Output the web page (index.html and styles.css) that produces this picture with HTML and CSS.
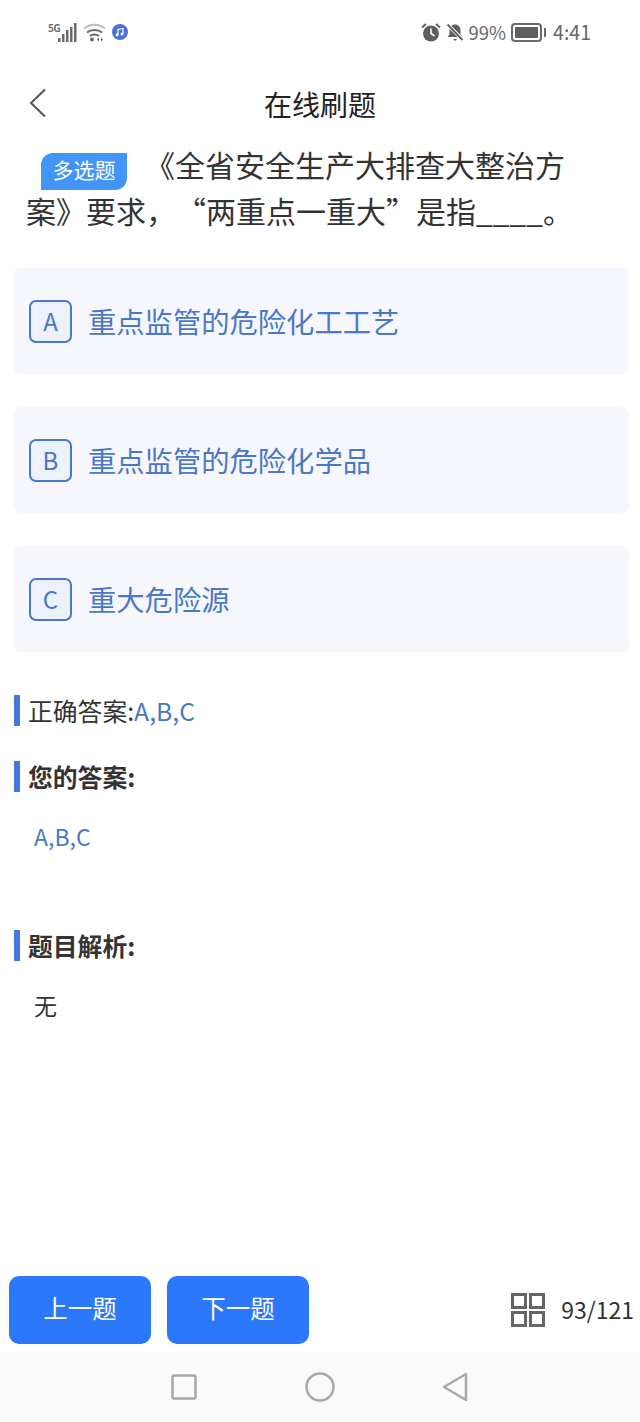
FILE: index.html
```html
<!DOCTYPE html>
<html lang="zh-CN">
<head>
<meta charset="utf-8">
<title>在线刷题</title>
<link rel="stylesheet" href="styles.css">
</head>
<body>
<div class="page">
  <div class="status">
    <div class="status-left">
      <span class="net">5G</span>
      <svg class="sig" width="19" height="19" viewBox="0 0 19 19"><g fill="#6b6b6b"><rect x="0" y="15" width="2.500" height="4"/><rect x="4" y="11" width="2.500" height="8"/><rect x="8" y="7" width="2.500" height="12"/><rect x="12" y="4" width="2.500" height="15"/><rect x="16" y="0" width="2.500" height="19"/></g></svg>
      <svg class="wifi" width="23" height="19" viewBox="0 0 23 19"><path d="M1 5.500C7 0.500 16 0.500 22 5.500" fill="none" stroke="#bdbdbd" stroke-width="2"/><path d="M4 9.500C8 6 15 6 19 9.500" fill="none" stroke="#6b6b6b" stroke-width="2"/><path d="M7 13C9.500 11 13.500 11 16 13" fill="none" stroke="#6b6b6b" stroke-width="2"/><circle cx="9" cy="16.500" r="2" fill="#6b6b6b"/><path d="M14 16.500l2-2v4zM18 14.500l2 2-2 2z" fill="#6b6b6b"/></svg>
      <svg class="music" width="16" height="16" viewBox="0 0 16 16"><circle cx="8" cy="8" r="8" fill="#4a73d8"/><path d="M6 11V5.500l5-1V10" fill="none" stroke="#fff" stroke-width="1.200"/><circle cx="5" cy="11" r="1.400" fill="#fff"/><circle cx="10" cy="10" r="1.400" fill="#fff"/></svg>
    </div>
    <div class="status-right">
      <svg width="20" height="19" viewBox="0 0 20 19"><circle cx="10" cy="10.500" r="8" fill="#5f5f5f"/><path d="M10 5.500v5l3.500 2.500" fill="none" stroke="#fff" stroke-width="1.600"/><path d="M1 4.500L5 1M19 4.500L15 1" stroke="#5f5f5f" stroke-width="2" fill="none"/></svg>
      <svg class="bell" width="18" height="19" viewBox="0 0 18 19"><path d="M9 1.500c3.500 0 5.500 2.500 5.500 6v4l2 2.500H1.500l2-2.500v-4c0-3.500 2-6 5.500-6z" fill="#5f5f5f"/><path d="M7 16h4l-2 2z" fill="#5f5f5f"/><path d="M1 1l16 16" stroke="#fff" stroke-width="3.500"/><path d="M1.500 1.500l15 15.500" stroke="#5f5f5f" stroke-width="1.800"/></svg>
      <span class="pct">99%</span>
      <span class="battery"><span class="battery-fill"></span></span>
      <span class="battery-tip"></span>
      <span class="time">4:41</span>
    </div>
  </div>

  <div class="header">
    <svg class="back" width="18" height="30" viewBox="0 0 18 30"><path d="M16 1.500L2 15l14 13.500" fill="none" stroke="#555" stroke-width="2"/></svg>
    <div class="title">在线刷题</div>
  </div>

  <div class="question"><span class="tag">多选题</span>《全省安全生产大排查大整治方案》要求，“两重点一重大”是指____。</div>

  <div class="options">
    <div class="option"><span class="letter">A</span><span class="opt-text">重点监管的危险化工工艺</span></div>
    <div class="option"><span class="letter">B</span><span class="opt-text">重点监管的危险化学品</span></div>
    <div class="option"><span class="letter">C</span><span class="opt-text">重大危险源</span></div>
  </div>

  <div class="sec sec-answer"><span class="sec-text">正确答案:</span><span class="sec-text blue">A,B,C</span></div>
  <div class="sec sec-bold"><span class="sec-text">您的答案:</span></div>
  <div class="val blue">A,B,C</div>
  <div class="sec sec-bold sec-gap"><span class="sec-text">题目解析:</span></div>
  <div class="val">无</div>

  <div class="spacer"></div>

  <div class="footer">
    <button class="btn">上一题</button>
    <button class="btn">下一题</button>
    <div class="count">
      <svg width="34" height="34" viewBox="0 0 34 34"><g fill="none" stroke="#666" stroke-width="3"><rect x="1.500" y="1.500" width="13" height="13"/><rect x="19.500" y="1.500" width="13" height="13"/><rect x="1.500" y="19.500" width="13" height="13"/><rect x="19.500" y="19.500" width="13" height="13"/></g></svg>
      <span class="count-text">93/121</span>
    </div>
  </div>

  <div class="nav">
    <svg width="26" height="26" viewBox="0 0 26 26"><rect x="1.500" y="1.500" width="23" height="23" rx="1.500" fill="none" stroke="#a9a9a9" stroke-width="2.500"/></svg>
    <svg width="30" height="30" viewBox="0 0 30 30"><circle cx="15" cy="15" r="13.500" fill="none" stroke="#a9a9a9" stroke-width="2.500"/></svg>
    <svg width="26" height="30" viewBox="0 0 26 30"><path d="M24 2L2 15l22 13z" fill="none" stroke="#a9a9a9" stroke-width="2.500" stroke-linejoin="round"/></svg>
  </div>
</div>
</body>
</html>
```
FILE: styles.css
```css
* { box-sizing: border-box; }
html, body { margin: 0; padding: 0; background: #fff; }
body { font-family: "Noto Sans CJK SC", "Noto Sans", sans-serif; color: #333; }
.page { width: 640px; height: 1422px; display: flex; flex-direction: column; overflow: hidden; }

.status { height: 64px; display: flex; justify-content: space-between; padding: 20px 49px 0 48px; flex: none; }
.status-left { display: flex; align-items: flex-start; position: relative; }
.net { font-size: 10px; line-height: 12px; font-weight: 700; color: #666; width: 10px; margin-top: 2px; letter-spacing: -0.500px; }
.sig { margin-top: 3px; }
.wifi { margin: 3px 0 0 6px; }
.music { margin: 4px 0 0 6px; }
.status-right { display: flex; align-items: center; height: 24px; color: #666; font-size: 19.500px; line-height: 24px; }
.bell { margin-left: 5px; }
.pct { margin-left: 5px; font-size: 18.500px; }
.battery { margin-left: 5px; width: 31px; height: 19px; border: 2px solid #6b6b6b; border-radius: 4px; padding: 2px; display: flex; }
.battery-fill { flex: 1; background: #5f5f5f; border-radius: 1px; }
.battery-tip { width: 2px; height: 9px; background: #6b6b6b; margin-left: 2px; }
.time { margin-left: 7px; }

.header { height: 80px; position: relative; display: flex; align-items: center; justify-content: center; flex: none; }
.back { position: absolute; left: 29px; top: 24px; }
.title { font-size: 28px; line-height: 40px; color: #222; }

.question { font-size: 30px; line-height: 46px; padding: 0 54px 0 26px; margin-top: -3px; color: #333; flex: none; text-spacing-trim: space-all; font-kerning: none; }
.tag { display: inline-block; width: 86px; height: 37px; line-height: 33px; margin: -4px 18px -4px 15px; text-align: center; font-size: 21px; color: #fff; background: #4295f5; border-radius: 12px 0 12px 0; vertical-align: -1px; }

.options { margin-top: 35px; padding: 0 11px 0 13px; display: flex; flex-direction: column; gap: 33px; flex: none; }
.option { height: 106px; background: #f6f7fc; border-radius: 8px; display: flex; align-items: center; padding-left: 16px; color: #4a78c6; gap: 16px; }
.opt-text { font-size: 28.300px; line-height: 40px; }
.letter { width: 43px; height: 43px; border: 2px solid #4a78c6; border-radius: 7px; background: #edf1fb; display: flex; align-items: center; justify-content: center; font-size: 24px; line-height: 30px; }

.sec { margin-left: 14px; border-left: 6px solid #4477e0; padding-left: 8px; height: 31px; flex: none; color: #333; }
.sec-text { font-size: 24.800px; line-height: 31px; }
.sec-answer { margin-top: 43px; display: flex; }
.sec-bold { font-weight: 700; margin-top: 35px; }
.sec-gap { margin-top: 78px; }
.blue { color: #4a78c6; }
.val { margin: 28px 0 0 34px; font-size: 23px; line-height: 32px; color: #333; flex: none; }
.val.blue { color: #4a78c6; }

.spacer { flex: 1; }

.footer { height: 76px; display: flex; align-items: flex-start; padding: 0 6px 0 9px; gap: 16px; flex: none; }
.btn { width: 142px; height: 68px; border: 0; border-radius: 10px; background: #2c78fb; color: #fff; font-family: inherit; font-size: 24.500px; padding: 0 0 6px; }
.count { margin-left: auto; height: 68px; display: flex; align-items: center; gap: 16px; color: #333; }
.count-text { font-size: 23px; padding-bottom: 2px; }

.nav { height: 70px; background: #fafafa; display: flex; align-items: center; justify-content: center; flex: none; padding-right: 2px; }
.nav svg:nth-child(1) { margin-right: 108px; }
.nav svg:nth-child(2) { margin-right: 107px; }
```
